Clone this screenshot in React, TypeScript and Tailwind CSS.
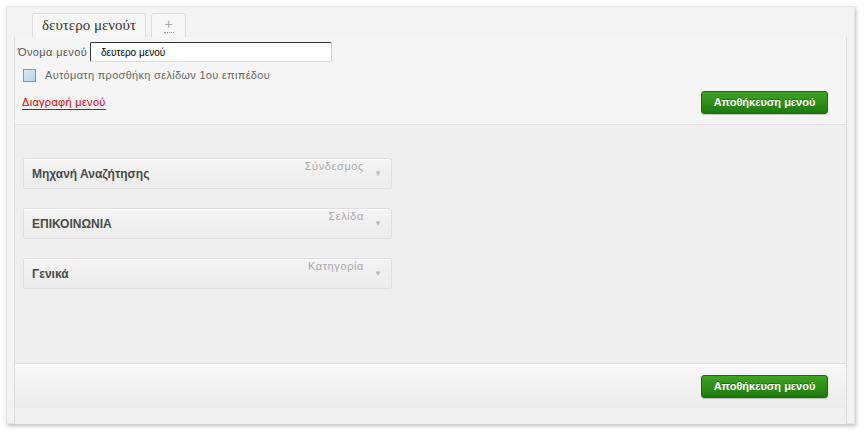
import React from 'react';

const items = [
  { title: 'Μηχανή Αναζήτησης', kind: 'Σύνδεσμος' },
  { title: 'ΕΠΙΚΟΙΝΩΝΙΑ', kind: 'Σελίδα' },
  { title: 'Γενικά', kind: 'Κατηγορία' },
];

function SaveButton() {
  return (
    <button className="h-[23px] w-[127px] rounded-[3px] border border-[#1f6b0a] bg-gradient-to-b from-[#3fa424] to-[#1d7a0b] text-[11px] font-bold text-white shadow-[0_1px_1px_rgba(0,0,0,0.2)] [text-shadow:0_-1px_0_rgba(0,0,0,0.3)]">
      Αποθήκευση μενού
    </button>
  );
}

function MenuItem({ title, kind }: { title: string; kind: string }) {
  return (
    <div className="relative h-[31px] w-[369px] rounded-[2px] border border-[#dfdfdf] bg-gradient-to-b from-[#f4f4f4] to-[#ececec] shadow-[inset_0_1px_0_#fff]">
      <span className="absolute left-[8px] top-[6px] text-[12px] font-bold text-[#4a4a4a]">{title}</span>
      <span className="absolute right-[27px] top-[-1px] text-[11px] tracking-[0.6px] text-[#aaa]">{kind}</span>
      <span className="absolute right-[9px] top-[9px] text-[8px] text-[#bbb]">▼</span>
    </div>
  );
}

export default function App() {
  return (
    <div className="h-[431px] w-[867px] bg-white font-['Liberation_Sans',Arial,sans-serif]">
      <div className="ml-[6px] pt-[6px]">
        <div className="h-[418px] w-[849px] border border-[#e3e3e3] bg-[#f3f3f3] px-[7px] shadow-[1px_2px_4px_rgba(0,0,0,0.25)]">
          {/* tab strip */}
          <div className="flex h-[30px] items-end gap-[5px] pl-[18px]">
            <div className="flex h-[24px] w-[114px] items-center justify-center rounded-t-[3px] border border-b-0 border-[#dcdcdc] bg-[#f6f6f6] font-['Liberation_Serif',serif] text-[15px] text-[#333]">
              δευτερο μενούτ
            </div>
            <div className="flex h-[24px] w-[35px] flex-col items-center justify-center rounded-t-[3px] border border-b-0 border-[#dcdcdc] bg-[#f6f6f6] text-[#aaa]">
              <span className="text-[14px] leading-[12px]">+</span>
              <span className="mt-[2px] h-0 w-[10px] border-t border-dotted border-[#999]" />
            </div>
          </div>

          <div className="flex h-[387px] flex-col border-l border-r border-[#dcdcdc]">
            {/* header */}
            <div className="relative h-[88px] border-b border-[#dedede] bg-[#f5f5f5]">
              <div className="flex items-center pl-[3px] pt-[5px]">
                <span className="w-[72px] text-[11px] tracking-[0.4px] text-[#555]">Όνομα μενού</span>
                <input
                  defaultValue="δευτερο μενού"
                  className="h-[20px] w-[242px] rounded-[2px] border border-[#333] border-r-[#ccc] border-b-[#ddd] bg-white px-[10px] text-[10px] text-black outline-none"
                />
              </div>
              <label className="mt-[5px] flex items-center pl-[8px]">
                <span className="h-[13px] w-[13px] border border-[#6e9ac9] bg-gradient-to-br from-[#dbe9f7] to-[#b9d3ee]" />
                <span className="ml-[9px] text-[11px] tracking-[0.3px] text-[#666]">Αυτόματη προσθήκη σελίδων 1ου επιπέδου</span>
              </label>
              <div className="mt-[5px] pl-[7px]">
                <span className="border-b border-[#d00] pb-[1px] text-[11px] text-[#d00] tracking-[0.3px]">Διαγραφή μενού</span>
              </div>
              <div className="absolute right-[18px] top-[52px]">
                <SaveButton />
              </div>
            </div>

            {/* items */}
            <div className="flex flex-1 flex-col gap-[19px] bg-[#efefef] pl-[8px] pt-[33px]">
              {items.map((it) => (
                <MenuItem key={it.title} title={it.title} kind={it.kind} />
              ))}
            </div>

            {/* footer */}
            <div className="flex h-[45px] items-center justify-end border-t border-[#dedede] bg-gradient-to-b from-[#f8f8f8] to-[#ebebeb] pr-[18px]">
              <SaveButton />
            </div>
            <div className="h-[16px] bg-[#f0f0f0]" />
          </div>
        </div>
      </div>
    </div>
  );
}
